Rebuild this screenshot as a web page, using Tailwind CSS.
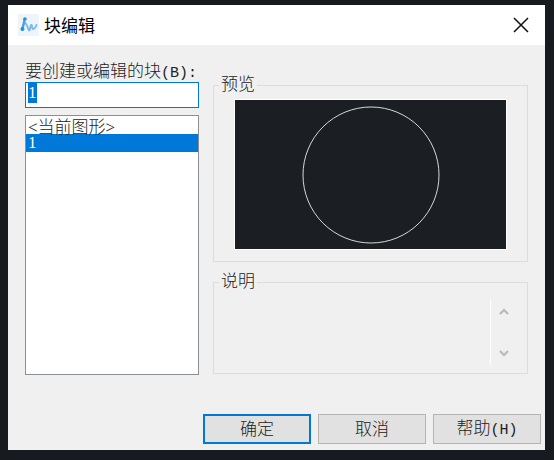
<!DOCTYPE html>
<html lang="zh-CN">
<head>
  <meta charset="UTF-8">
  <meta name="viewport" content="width=device-width, initial-scale=1.0">
  <title>块编辑</title>
  <script src="https://cdn.jsdelivr.net/npm/@tailwindcss/browser@4"></script>
</head>
<body class="min-h-screen flex flex-col bg-[#171b1f] pt-[5px] pr-[9px] pb-[10px] pl-2 font-['Liberation_Serif','Noto_Sans_CJK_SC',serif] text-[17px] leading-5 font-light text-[#222]">
  <div role="dialog" aria-labelledby="title" class="flex-1 flex flex-col bg-[#f0f0f0]">
    <!-- Title bar -->
    <header class="flex items-center h-10 bg-white pl-2.5 pr-4">
      <svg class="w-[21px] h-[22px] mr-[5px]" viewBox="0 0 21 22" fill="none" aria-hidden="true">
        <rect width="21" height="22" fill="#edf5fb"/>
        <path d="M6.500 5C6.500 9 5 12 4 15.500" stroke="#4b9de0" stroke-width="2.400" stroke-linecap="round"/>
        <path d="M7.500 9C9 11 10 14 11 16.500C12.500 17 12 10.500 13.500 11C14.500 12 14 15.500 15.500 15C17 14.500 18 12.500 18.500 11" stroke="#7dbbe9" stroke-width="2" stroke-linecap="round" stroke-linejoin="round"/>
        <circle cx="7" cy="5" r="1.800" fill="#2f8ddd"/>
        <circle cx="4.500" cy="15" r="2" fill="#2f8ddd"/>
      </svg>
      <h1 id="title" class="font-['Noto_Sans_CJK_SC',sans-serif] font-normal text-black">块编辑</h1>
      <button type="button" aria-label="关闭" class="ml-auto">
        <svg class="w-4 h-4" viewBox="0 0 16 16" fill="none" stroke="#111" stroke-width="1.500" aria-hidden="true">
          <path d="M1 1L15 15M15 1L1 15"/>
        </svg>
      </button>
    </header>

    <form class="flex-1 flex flex-col pt-[17px]">
      <div class="flex gap-3.5 px-[17px]">
        <!-- Block name and list -->
        <div class="w-[174px] flex flex-col">
          <label for="block-name" class="h-5 whitespace-nowrap">要创建或编辑的块<span class="font-['Liberation_Mono',monospace] text-[15px]">(B):</span></label>
          <input id="block-name" type="text" value="1" autofocus class="h-[26px] px-0.5 pb-1 bg-white border border-[#0078d7] leading-[18px] outline-none selection:bg-[#0078d7] selection:text-white">
          <select id="block-list" size="2" aria-label="块列表" class="mt-[7px] h-[260px] bg-white border border-[#8b8f98] outline-none overflow-hidden">
            <option class="flex items-center h-[18px] min-h-0 p-0 pl-0.5 font-light">&lt;当前图形&gt;</option>
            <option selected class="flex items-center h-[18px] min-h-0 p-0 pl-0.5 font-light bg-linear-to-r from-[#0078d7] to-[#0078d7] text-white [-webkit-text-fill-color:white]">1</option>
          </select>
        </div>

        <div class="flex-1 flex flex-col gap-2.5 pt-[13px]">
          <!-- Preview -->
          <fieldset class="border border-[#dcdcdc] px-[5px] pb-3">
            <legend class="px-0.5">预览</legend>
            <div class="mt-[5px] mx-4 h-[149px] flex items-center justify-center bg-[#1b1e23] outline outline-white">
              <svg class="w-[138px] h-[138px]" viewBox="0 0 138 138" fill="none" aria-hidden="true">
                <circle cx="69" cy="69" r="68" stroke="#d8d8d8"/>
              </svg>
            </div>
          </fieldset>

          <!-- Description -->
          <fieldset class="border border-[#dcdcdc] px-[5px] pb-[7px]">
            <legend class="px-0.5">说明</legend>
            <div class="flex mt-[7px] mx-2.5 h-[67px]">
              <textarea aria-label="说明" readonly class="flex-1 min-w-0 resize-none outline-none"></textarea>
              <div class="w-[22px] flex flex-col items-center justify-between border-l border-white py-2 pl-1">
                <button type="button" aria-label="向上" class="block">
                  <svg class="w-2.5 h-2.5" viewBox="0 0 10 10" fill="none" stroke="#b8b8b8" stroke-width="2" aria-hidden="true"><path d="M1 7L5 3L9 7"/></svg>
                </button>
                <button type="button" aria-label="向下" class="block">
                  <svg class="w-2.5 h-2.5" viewBox="0 0 10 10" fill="none" stroke="#b8b8b8" stroke-width="2" aria-hidden="true"><path d="M1 3L5 7L9 3"/></svg>
                </button>
              </div>
            </div>
          </fieldset>
        </div>
      </div>

      <!-- Actions -->
      <div class="mt-auto flex justify-end gap-[7px] pr-1 pb-1.5">
        <button type="submit" class="w-[108px] h-[30px] pt-0.5 bg-[#e1e1e1] border-2 border-[#0078d7]">确定</button>
        <button type="button" class="w-[108px] h-[30px] pt-0.5 bg-[#e1e1e1] border border-[#b4b4b4]">取消</button>
        <button type="button" class="w-[108px] h-[30px] pt-0.5 bg-[#e1e1e1] border border-[#b4b4b4]">帮助<span class="font-['Liberation_Mono',monospace] text-[15px]">(H)</span></button>
      </div>
    </form>
  </div>

  <script>
    const blockName = document.getElementById('block-name');
    const blockList = document.getElementById('block-list');

    blockName.focus();
    blockName.select();

    // Picking a block copies its name to the text box
    blockList.addEventListener('change', () => {
      blockName.value = blockList.value;
    });
  </script>
</body>
</html>
